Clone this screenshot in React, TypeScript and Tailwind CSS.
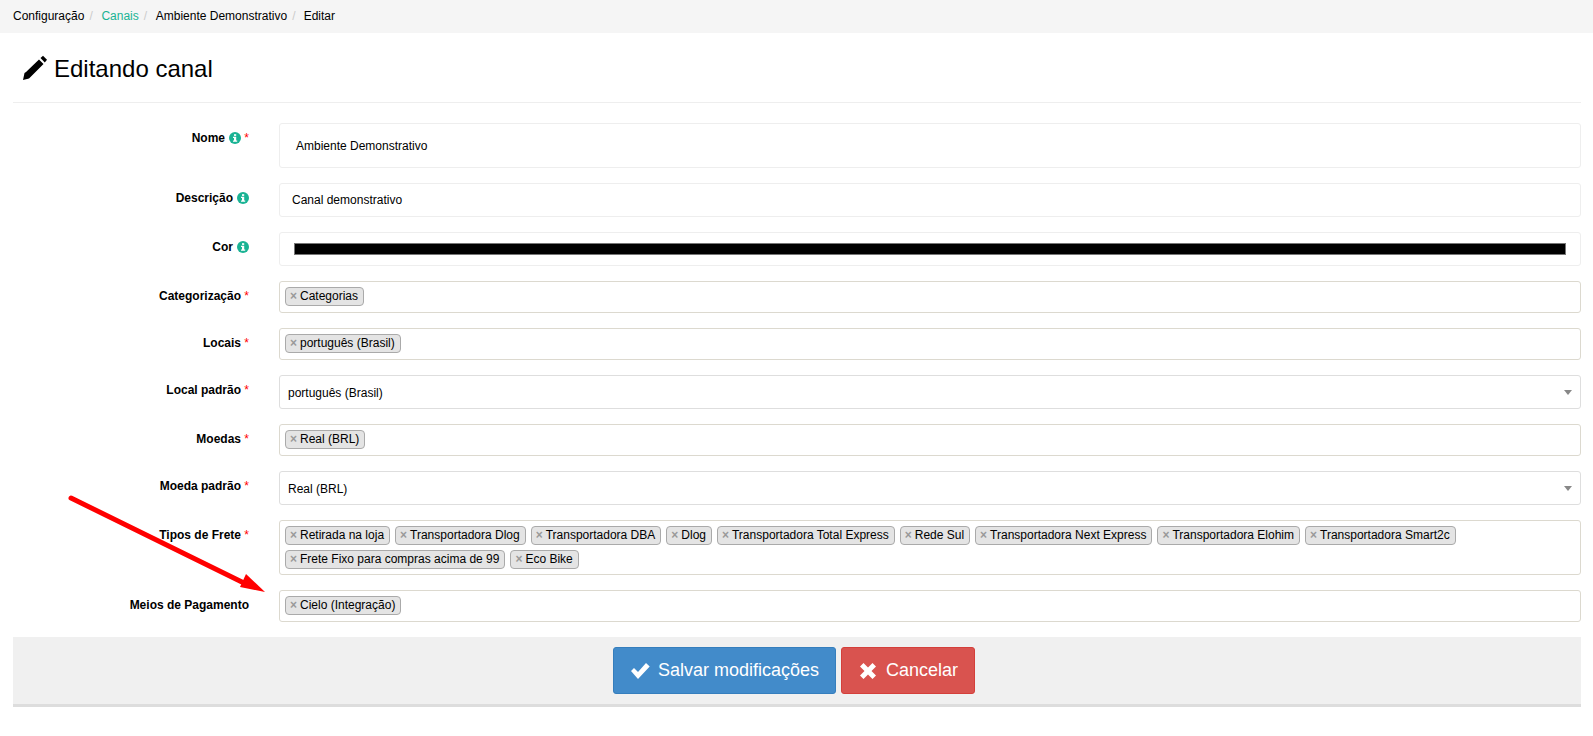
function Info() {
  return (
    <svg className="inline-block ml-[4px] align-[-1.5px]" width="12" height="12" viewBox="0 0 12 12">
      <circle cx="6" cy="6" r="6" fill="#1ab394" />
      <rect x="5" y="2.2" width="2.2" height="1.7" fill="#ffffff" />
      <polygon points="4,4.8 7.2,4.8 7.2,8.6 8.2,8.6 8.2,9.8 4,9.8 4,8.6 5,8.6 5,6 4,6" fill="#ffffff" />
    </svg>
  );
}

function Req() {
  return <span className="text-[#ff0000] ml-[3.3px] font-normal">*</span>;
}

function Row({ text, info, req, children }: { text: string; info?: boolean; req?: boolean; children: React.ReactNode }) {
  return (
    <div className="flex gap-[30px] mb-[15px]">
      <div className="w-[236px] shrink-0 pt-[5px] text-right font-bold text-[12px] leading-[20px] text-black">
        {text}
        {info && <Info />}
        {req && <Req />}
      </div>
      <div className="flex-1 min-w-0">{children}</div>
    </div>
  );
}

function Tag({ text }: { text: string }) {
  return (
    <span className="inline-flex items-center h-[19px] pl-[4px] pr-[5px] border border-[#aaaaaa] rounded-[4px] bg-[#e4e4e4] text-[12px] leading-[17px] text-black whitespace-nowrap">
      <span className="w-[10px] pb-[2px] text-[#999999] font-bold text-[12px] leading-none">×</span>
      {text}
    </span>
  );
}

function Tags({ items }: { items: string[] }) {
  return (
    <div className="flex flex-wrap gap-[5px] min-h-[32px] p-[5px] border border-[#dcd9cf] rounded-[3px] bg-white">
      {items.map((t) => (
        <Tag key={t} text={t} />
      ))}
    </div>
  );
}

function Select({ text }: { text: string }) {
  return (
    <div className="flex items-center justify-between h-[34px] pl-[8px] pr-[8px] border border-[#dedede] rounded-[3px] bg-white text-[12px] text-black">
      <span className="pt-[1px]">{text}</span>
      <span className="w-0 h-0 border-x-[4px] border-x-transparent border-t-[5px] border-t-[#888888]" />
    </div>
  );
}

const fretes = [
  "Retirada na loja",
  "Transportadora Dlog",
  "Transportadora DBA",
  "Dlog",
  "Transportadora Total Express",
  "Rede Sul",
  "Transportadora Next Express",
  "Transportadora Elohim",
  "Transportadora Smart2c",
  "Frete Fixo para compras acima de 99",
  "Eco Bike",
];

export default function App() {
  return (
    <div className="relative w-[1593px] h-[736px] overflow-hidden bg-white text-black text-[12px] font-['Liberation_Sans',Arial,sans-serif]">
      <nav className="flex items-center h-[33px] pl-[13px] pb-[1px] bg-[#f5f5f5] text-[12px]">
        <span>Configuração</span>
        <span className="text-[#cccccc] ml-[5px] w-[12px]">/</span>
        <span className="text-[#1ab394]">Canais</span>
        <span className="text-[#cccccc] ml-[5px] w-[12px]">/</span>
        <span>Ambiente Demonstrativo</span>
        <span className="text-[#cccccc] ml-[5px] w-[11.5px]">/</span>
        <span>Editar</span>
      </nav>

      <div className="pl-[13px] pr-[12px]">
        <div className="flex items-center h-[70px] pl-[10px] border-b border-[#eeeeee]">
          <svg className="mr-[7px]" width="24" height="25" viewBox="0 0 24 25">
            <polygon points="0,25 1.5,18 3,17 16,4.5 20.5,9 7.5,22 6,23.5" fill="#000000" />
            <polygon points="17.5,3 20,0.8 24,4.8 21.8,7.4" fill="#000000" />
          </svg>
          <h1 className="text-[24px] leading-[30px] font-normal mt-[2px]">Editando canal</h1>
        </div>

        <div className="pt-[20px]">
          <Row text="Nome" info req>
            <div className="flex items-center h-[45px] pl-[16px] border border-[#eeeeee] rounded-[3px]">Ambiente Demonstrativo</div>
          </Row>
          <Row text="Descrição" info>
            <div className="flex items-center h-[34px] pl-[12px] border border-[#eeeeee] rounded-[3px]">Canal demonstrativo</div>
          </Row>
          <Row text="Cor" info>
            <div className="flex items-center h-[34px] pl-[14px] pr-[14px] border border-[#eeeeee] rounded-[3px]">
              <div className="h-[12px] w-full bg-black border border-[#767676]" />
            </div>
          </Row>
          <Row text="Categorização" req>
            <Tags items={["Categorias"]} />
          </Row>
          <Row text="Locais" req>
            <Tags items={["português (Brasil)"]} />
          </Row>
          <Row text="Local padrão" req>
            <Select text="português (Brasil)" />
          </Row>
          <Row text="Moedas" req>
            <Tags items={["Real (BRL)"]} />
          </Row>
          <Row text="Moeda padrão" req>
            <Select text="Real (BRL)" />
          </Row>
          <Row text="Tipos de Frete" req>
            <Tags items={fretes} />
          </Row>
          <Row text="Meios de Pagamento">
            <Tags items={["Cielo (Integração)"]} />
          </Row>
        </div>

        <div className="flex justify-center gap-[5px] h-[70px] pt-[10px] pr-[6px] bg-[#f0f0f0] border-b-[3px] border-[#dddddd]">
          <button className="flex items-center h-[47px] w-[223px] pl-[17px] bg-[#428bca] border border-[#357ebd] rounded-[3px] text-white text-[18px]">
            <svg className="mr-[8px]" width="19" height="16" viewBox="0 0 19 16">
              <polygon points="0,8 3,5 7,9 15,0 18.7,3.5 7,16" fill="#ffffff" />
            </svg>
            Salvar modificações
          </button>
          <button className="flex items-center h-[47px] w-[134px] pl-[18px] bg-[#d9534f] border border-[#d43f3a] rounded-[3px] text-white text-[18px]">
            <svg className="mr-[10px]" width="16" height="16" viewBox="0 0 16 16">
              <polygon points="3.5,0 8,4.5 12.5,0 16,3.5 11.5,8 16,12.5 12.5,16 8,11.5 3.5,16 0,12.5 4.5,8 0,3.5" fill="#ffffff" />
            </svg>
            Cancelar
          </button>
        </div>
      </div>

      <svg className="absolute left-0 top-0 pointer-events-none" width="1593" height="736" viewBox="0 0 1593 736">
        <line x1="71" y1="498" x2="246" y2="584" stroke="#ff0000" strokeWidth="5" strokeLinecap="round" />
        <polygon points="265,592 240,587 246,574" fill="#ff0000" />
      </svg>
    </div>
  );
}
